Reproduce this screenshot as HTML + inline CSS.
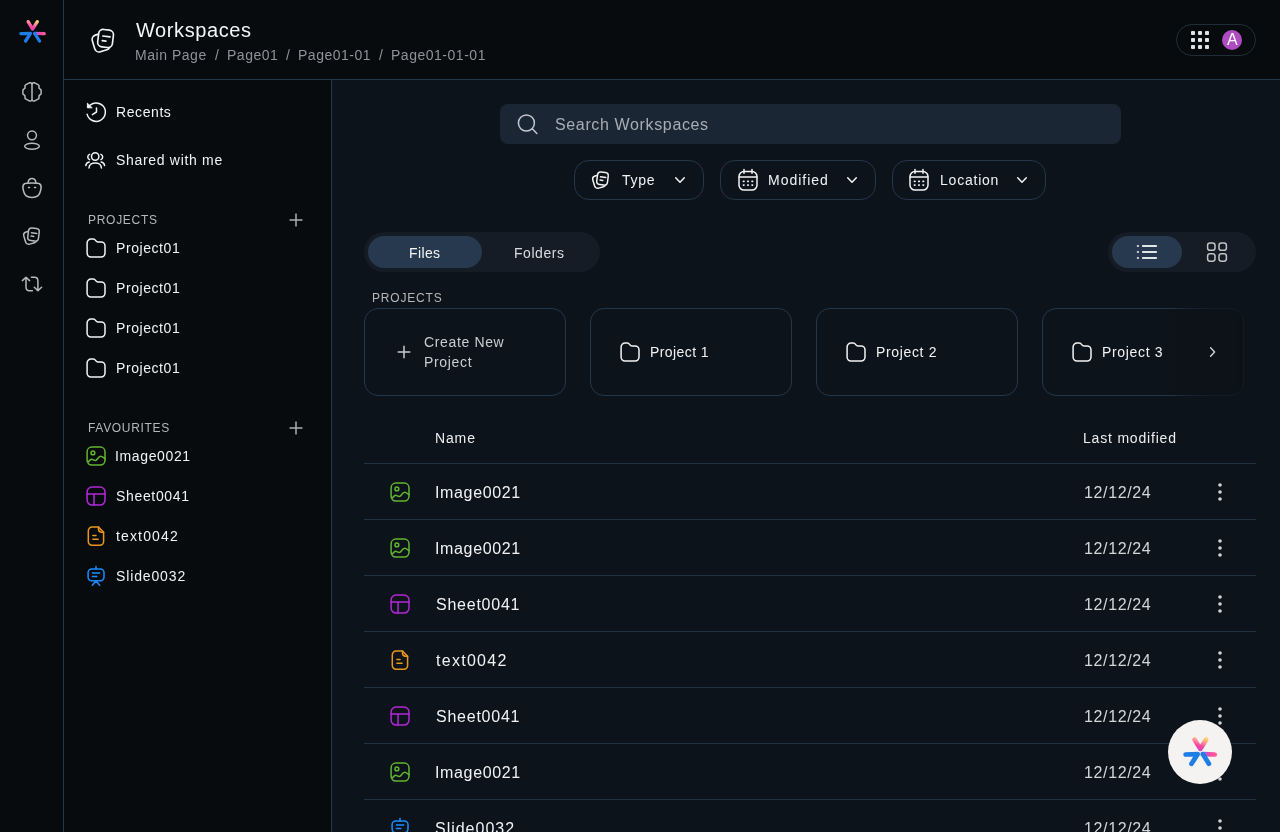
<!DOCTYPE html>
<html lang="en">
<head>
<meta charset="utf-8">
<title>Workspaces</title>
<style>
*{box-sizing:border-box;margin:0;padding:0}
html,body{width:1280px;height:832px;overflow:hidden;background:#070b0e;color:#f1f2f3;font-family:"Liberation Sans",sans-serif}
body{position:relative}
nav,header,aside,main,section{display:contents}
.a{position:absolute}
svg{position:absolute;display:block;overflow:visible}
.t{position:absolute;white-space:nowrap;will-change:transform}
.bd{border:1px solid #24374b}
.line{position:absolute;left:364px;width:892px;height:1px;background:#203145}
</style>
</head>
<body>

<svg width="0" height="0" style="position:absolute">
<defs>
<linearGradient id="gV" gradientUnits="userSpaceOnUse" x1="32.6" y1="31" x2="36.5" y2="19.5"><stop offset="0" stop-color="#a45ee8"/><stop offset="0.12" stop-color="#e246b8"/><stop offset="0.3" stop-color="#f5409f"/><stop offset="0.6" stop-color="#fb8f9e"/><stop offset="0.85" stop-color="#fec86c"/><stop offset="1" stop-color="#ffdc5c"/></linearGradient>
<linearGradient id="gR" gradientUnits="userSpaceOnUse" x1="34" y1="33.5" x2="44.5" y2="33.5"><stop offset="0" stop-color="#3f73ea"/><stop offset="0.3" stop-color="#b25ad8"/><stop offset="0.6" stop-color="#f646a6"/><stop offset="1" stop-color="#ff5c9c"/></linearGradient>
<symbol id="logo" viewBox="14 14 36 36">
<g fill="none" style="stroke-width:var(--sw,3.3)" stroke-linecap="round" stroke-linejoin="round">
<path d="M28.1 21.7 L32.6 29.1 L37.3 21.7" stroke="url(#gV)"/>
<path d="M44.2 33.6 L34.6 33.3" stroke="url(#gR)"/>
<path d="M34.9 33.6 L39.5 41" stroke="#1f7de6"/>
<path d="M20.9 33.6 L30.5 33.3 L25.6 41" stroke="#1f7de6"/>
</g>
</symbol>
<symbol id="i-brain" viewBox="0 0 24 24"><g fill="none" stroke="currentColor" stroke-width="1.5" stroke-linecap="round" stroke-linejoin="round">
<path d="M12 3.6 Q10.9 2.5 9.3 2.8 L5.6 4.8 Q5 5.1 5 5.8 V7.9 Q5 8.4 4.5 8.7 L3.4 9.4 Q2.9 9.7 2.9 10.3 V13.6 Q2.9 14.2 3.4 14.5 L4.5 15.1 Q5 15.4 5 16 V17.9 Q5 18.6 5.6 18.9 L9.3 20.9 Q10.9 21.3 12 20.3"/>
<path d="M 12.0 3.6 Q 13.1 2.5 14.7 2.8 L 18.4 4.8 Q 19.0 5.1 19.0 5.8 V 7.9 Q 19.0 8.4 19.5 8.7 L 20.6 9.4 Q 21.1 9.7 21.1 10.3 V 13.6 Q 21.1 14.2 20.6 14.5 L 19.5 15.1 Q 19.0 15.4 19.0 16 V 17.9 Q 19.0 18.6 18.4 18.9 L 14.7 20.9 Q 13.1 21.3 12.0 20.3"/>
<path d="M12 3.6V20.3"/></g></symbol>
<symbol id="i-user" viewBox="0 0 24 24"><g fill="none" stroke="currentColor" stroke-width="1.5"><circle cx="12" cy="7.35" r="4.45"/><ellipse cx="12" cy="18.3" rx="7.3" ry="3"/></g></symbol>
<symbol id="i-bag" viewBox="0 0 24 24"><g fill="none" stroke="currentColor" stroke-width="1.5" stroke-linecap="round" stroke-linejoin="round">
<path d="M12 6.9 C8 6.9 5.6 7 4.6 7.7 C3 8.9 2.6 10.5 3 12.5 C3.6 16 4.5 18.5 6.3 19.9 C7.8 21.2 10 21.5 12 21.5 C14 21.5 16.2 21.2 17.7 19.9 C19.5 18.5 20.4 16 21 12.5 C21.4 10.5 21 8.9 19.4 7.7 C18.4 7 16 6.9 12 6.9Z"/>
<path d="M8.1 6.9 C8.3 4.2 10 2.6 12 2.6 C14 2.6 15.7 4.2 15.9 6.9"/>
<path d="M8.5 11.4H9.5 M14.6 11.4H15.6"/></g></symbol>
<symbol id="i-stack" viewBox="0 0 24 24"><g fill="none" stroke="currentColor" style="stroke-width:var(--sw,1.5)" stroke-linecap="round" stroke-linejoin="round">
<g transform="rotate(-17 10.2 13.4)"><rect x="4.5" y="7.1" width="11.5" height="12.6" rx="3.3"/></g>
<g transform="rotate(7 13.5 10.5)"><rect x="8.1" y="4.2" width="10.8" height="12.7" rx="3.3" fill="var(--bg,#070b0e)"/><path d="M11.3 9H16.6 M11.3 12.4H14"/></g></g></symbol>
<symbol id="i-swap" viewBox="0 0 24 24"><g fill="none" stroke="currentColor" stroke-width="1.5" stroke-linecap="round" stroke-linejoin="round">
<path d="M2.4 8.6 L6 5.2 L9.6 8.6 M6 5.4 V15 C6 17.4 7.2 18.7 9.4 18.7 H12.4"/>
<path d="M21.6 15.3 L17.9 18.7 L14.3 15.3 M17.9 18.5 V9 C17.9 6.6 16.7 5.3 14.5 5.3 H11.5"/></g></symbol>
<symbol id="i-recent" viewBox="0 0 24 24"><g fill="none" stroke="currentColor" stroke-width="1.5" stroke-linecap="round" stroke-linejoin="round">
<path d="M4.3 7.2 A9.25 9.25 0 1 1 3.1 14.2"/>
<path d="M3.4 3.6 V7.8 H7.8 Z" fill="currentColor" stroke-width="1"/>
<path d="M12.5 8.1 V12 L8.4 14.6"/></g></symbol>
<symbol id="i-people" viewBox="0 0 24 24"><g fill="none" stroke="currentColor" stroke-width="1.5" stroke-linecap="round" stroke-linejoin="round">
<circle cx="11.2" cy="8.5" r="3.7"/>
<path d="M5 19.9 C5 16.5 8 14.9 11.2 14.9 C14.4 14.9 17.4 16.5 17.4 19.9"/>
<path d="M5.6 6.4 C3.2 7.4 3.2 10.6 5.6 11.6 M16.9 6.4 C19.3 7.4 19.3 10.6 16.9 11.6"/>
<path d="M1.8 17.6 C2 15.6 3.3 14.5 5.2 14.1 M20.6 17.6 C20.4 15.6 19.1 14.5 17.2 14.1"/></g></symbol>
<symbol id="i-folder" viewBox="0 0 24 24"><path fill="none" stroke="currentColor" stroke-width="1.5" stroke-linejoin="round" d="M3.1 7 A3.9 3.9 0 0 1 7 3.1 H9.2 C10.6 3.1 11.2 3.8 11.7 4.6 C12.2 5.4 12.8 6 14.1 6 H17.1 A3.9 3.9 0 0 1 21 9.9 V17.1 A3.9 3.9 0 0 1 17.1 21 H7 A3.9 3.9 0 0 1 3.1 17.1 Z"/></symbol>
<symbol id="i-image" viewBox="0 0 24 24"><g fill="none" stroke="#62b52e" stroke-width="1.5" stroke-linecap="round" stroke-linejoin="round">
<rect x="3.1" y="3.1" width="17.9" height="18" rx="4.8"/><circle cx="8.9" cy="8.9" r="1.9"/>
<path d="M4.3 18 C5.5 16.6 6.4 15.2 7.6 15.2 C8.9 15.2 10 16.7 11.4 16.6 C13.2 16.4 14.4 12.2 16.5 12.2 C18.2 12.2 19.3 13.4 21 14.6"/></g></symbol>
<symbol id="i-sheet" viewBox="0 0 24 24"><g fill="none" stroke="#b228d8" stroke-width="1.5" stroke-linecap="round" stroke-linejoin="round">
<rect x="3.1" y="3.1" width="17.9" height="18" rx="5"/><path d="M3.1 10.05H21 M10.05 10.05V21.1"/></g></symbol>
<symbol id="i-text" viewBox="0 0 24 24"><g fill="none" stroke="#e8961e" stroke-width="1.5" stroke-linecap="round" stroke-linejoin="round">
<path d="M14.5 3.1 H8 A3.7 3.7 0 0 0 4.3 6.8 V17.5 A3.7 3.7 0 0 0 8 21.2 H15.9 A3.7 3.7 0 0 0 19.6 17.5 V8.2 Z"/>
<path d="M14.5 3.1 V5.3 C14.5 7.4 15.4 8.2 17.5 8.2 H19.6"/>
<path d="M8.9 11.6H12 M8.9 15.2H14.1"/></g></symbol>
<symbol id="i-slide" viewBox="0 0 24 24"><g fill="none" stroke="#1e8cff" stroke-width="1.5" stroke-linecap="round" stroke-linejoin="round">
<rect x="4.1" y="5" width="15.9" height="11.7" rx="3.6"/><path d="M12 2.4V5 M12 17 L8.3 21.3 M12 17 L15.7 21.3 M8.4 8.9H15.7 M8.4 12.5H12.8"/></g></symbol>
<symbol id="i-search" viewBox="0 0 24 24"><g fill="none" stroke="currentColor" stroke-width="1.5" stroke-linecap="round"><circle cx="10.4" cy="11" r="8"/><path d="M16.3 16.8 L20.8 21.4"/></g></symbol>
<symbol id="i-cal" viewBox="0 0 24 24"><g fill="none" stroke="currentColor" stroke-width="1.5" stroke-linecap="round" stroke-linejoin="round">
<path d="M8 1.6v3.6 M16 1.6v3.6 M3.2 9.1h17.6"/><rect x="3" y="3.5" width="18" height="18.6" rx="5"/>
<path stroke-width="1.6" d="M7.4 13.4h.6 M11.7 13.4h.6 M16 13.4h.6 M7.4 17.1h.6 M11.7 17.1h.6 M16 17.1h.6"/></g></symbol>
</defs></svg>

<div class="a" style="left:332px;top:80px;width:948px;height:752px;background:#0d131a"></div>
<div class="a" style="left:63px;top:0;width:1px;height:832px;background:#24384d"></div>
<div class="a" style="left:64px;top:79px;width:1216px;height:1px;background:#24384d"></div>
<div class="a" style="left:331px;top:80px;width:1px;height:752px;background:#24384d"></div>

<nav>
<svg style="left:14px;top:14px" width="36" height="36"><use href="#logo"/></svg>
<svg style="left:20px;top:80px;color:#b9b9b9;" width="24" height="24"><use href="#i-brain"/></svg>
<svg style="left:20px;top:128px;color:#b9b9b9;" width="24" height="24"><use href="#i-user"/></svg>
<svg style="left:20px;top:176px;color:#b9b9b9;" width="24" height="24"><use href="#i-bag"/></svg>
<svg style="left:20px;top:224px;color:#b9b9b9;" width="24" height="24"><use href="#i-stack"/></svg>
<svg style="left:20px;top:272px;color:#b9b9b9;" width="24" height="24"><use href="#i-swap"/></svg>
</nav>
<header>
<svg style="--sw:1.2;left:86.5px;top:23.5px;color:#f3f3f3;" width="33" height="33"><use href="#i-stack"/></svg>
<div class="t" id="ttl" style="left:136.06px;top:17.89px;font-size:20px;line-height:24px;color:#f4f5f6;letter-spacing:0.599px;">Workspaces</div>
<div class="t" id="bc1" style="left:135.28px;top:42.57px;font-size:14px;line-height:24px;color:#8f9397;letter-spacing:0.535px;">Main Page</div>
<div class="t" id="bs1" style="left:215.38px;top:42.57px;font-size:14px;line-height:24px;color:#8f9397;letter-spacing:0.000px;">/</div>
<div class="t" id="bc2" style="left:227.04px;top:42.57px;font-size:14px;line-height:24px;color:#8f9397;letter-spacing:0.514px;">Page01</div>
<div class="t" id="bs2" style="left:286.22px;top:42.57px;font-size:14px;line-height:24px;color:#8f9397;letter-spacing:0.000px;">/</div>
<div class="t" id="bc3" style="left:297.90px;top:42.57px;font-size:14px;line-height:24px;color:#8f9397;letter-spacing:0.517px;">Page01-01</div>
<div class="t" id="bs3" style="left:379.22px;top:42.57px;font-size:14px;line-height:24px;color:#8f9397;letter-spacing:0.000px;">/</div>
<div class="t" id="bc4" style="left:390.90px;top:42.57px;font-size:14px;line-height:24px;color:#8f9397;letter-spacing:0.516px;">Page01-01-01</div>
<div class="a" style="left:1176px;top:24px;width:80px;height:32px;border:1px solid #1f2d3b;border-radius:16px"></div>
<svg style="left:1190px;top:30px" width="20" height="20" viewBox="0 0 20 20" fill="#e4e4e4"><rect x="1" y="1" width="4" height="4" rx="1"/><rect x="8" y="1" width="4" height="4" rx="1"/><rect x="15" y="1" width="4" height="4" rx="1"/><rect x="1" y="8" width="4" height="4" rx="1"/><rect x="8" y="8" width="4" height="4" rx="1"/><rect x="15" y="8" width="4" height="4" rx="1"/><rect x="1" y="15" width="4" height="4" rx="1"/><rect x="8" y="15" width="4" height="4" rx="1"/><rect x="15" y="15" width="4" height="4" rx="1"/></svg>
<div class="a" style="left:1222px;top:30px;width:20px;height:20px;border-radius:10px;background:#b04cc2"></div>
<div class="t" id="av" style="left:1226.90px;top:28.41px;font-size:16px;line-height:24px;color:#ffffff;letter-spacing:0.000px;">A</div>
</header>
<aside>
<svg style="left:84px;top:100px;color:#f3f3f3;" width="24" height="24"><use href="#i-recent"/></svg><div class="t" id="s1" style="left:115.88px;top:100.37px;font-size:14px;line-height:24px;color:#f1f2f3;letter-spacing:0.585px;">Recents</div>
<svg style="left:84px;top:148px;color:#f3f3f3;" width="24" height="24"><use href="#i-people"/></svg><div class="t" id="s2" style="left:115.75px;top:148.37px;font-size:14px;line-height:24px;color:#f1f2f3;letter-spacing:0.686px;">Shared with me</div>
<div class="t" id="l1" style="left:87.77px;top:208.03px;font-size:12px;line-height:24px;color:#b6b7b8;letter-spacing:0.713px;">PROJECTS</div><svg style="left:288px;top:212px" width="16" height="16" viewBox="0 0 16 16"><path d="M8 1.5V14.5M1.5 8H14.5" stroke="#adadad" stroke-width="1.5" fill="none"/></svg>
<svg style="left:84px;top:236px;color:#f3f3f3;" width="24" height="24"><use href="#i-folder"/></svg><div class="t" id="p0" style="left:115.88px;top:236.37px;font-size:14px;line-height:24px;color:#f1f2f3;letter-spacing:0.566px;">Project01</div>
<svg style="left:84px;top:276px;color:#f3f3f3;" width="24" height="24"><use href="#i-folder"/></svg><div class="t" id="p1" style="left:115.88px;top:276.37px;font-size:14px;line-height:24px;color:#f1f2f3;letter-spacing:0.566px;">Project01</div>
<svg style="left:84px;top:316px;color:#f3f3f3;" width="24" height="24"><use href="#i-folder"/></svg><div class="t" id="p2" style="left:115.88px;top:316.37px;font-size:14px;line-height:24px;color:#f1f2f3;letter-spacing:0.566px;">Project01</div>
<svg style="left:84px;top:356px;color:#f3f3f3;" width="24" height="24"><use href="#i-folder"/></svg><div class="t" id="p3" style="left:115.88px;top:356.37px;font-size:14px;line-height:24px;color:#f1f2f3;letter-spacing:0.566px;">Project01</div>
<div class="t" id="l2" style="left:87.77px;top:416.03px;font-size:12px;line-height:24px;color:#b6b7b8;letter-spacing:0.675px;">FAVOURITES</div><svg style="left:288px;top:420px" width="16" height="16" viewBox="0 0 16 16"><path d="M8 1.5V14.5M1.5 8H14.5" stroke="#adadad" stroke-width="1.5" fill="none"/></svg>
<svg style="left:84px;top:444px;" width="24" height="24"><use href="#i-image"/></svg><div class="t" id="f1" style="left:115.33px;top:444.37px;font-size:14px;line-height:24px;color:#f1f2f3;letter-spacing:0.633px;">Image0021</div>
<svg style="left:84px;top:484px;" width="24" height="24"><use href="#i-sheet"/></svg><div class="t" id="f2" style="left:115.75px;top:484.37px;font-size:14px;line-height:24px;color:#f1f2f3;letter-spacing:0.666px;">Sheet0041</div>
<svg style="left:84px;top:524px;" width="24" height="24"><use href="#i-text"/></svg><div class="t" id="f3" style="left:115.72px;top:524.37px;font-size:14px;line-height:24px;color:#f1f2f3;letter-spacing:1.145px;">text0042</div>
<svg style="left:84px;top:564px;" width="24" height="24"><use href="#i-slide"/></svg><div class="t" id="f4" style="left:115.75px;top:564.37px;font-size:14px;line-height:24px;color:#f1f2f3;letter-spacing:0.863px;">Slide0032</div>
</aside>
<main>
<div class="a" style="left:499.5px;top:104px;width:621px;height:40px;border-radius:8px;background:#1b2634"></div>
<svg style="left:516px;top:112px;color:#c3c8cd;" width="24" height="24"><use href="#i-search"/></svg><div class="t" id="sr" style="left:554.69px;top:112.71px;font-size:16px;line-height:24px;color:#a7adb4;letter-spacing:0.639px;">Search Workspaces</div>
<div class="a bd" style="left:573.5px;top:160px;width:130px;height:40px;border-radius:15px"></div>
<div class="a bd" style="left:719.5px;top:160px;width:156px;height:40px;border-radius:15px"></div>
<div class="a bd" style="left:891.5px;top:160px;width:154.5px;height:40px;border-radius:15px"></div>
<svg style="left:589px;top:168px;color:#f3f3f3;--bg:#0d131a;" width="24" height="24"><use href="#i-stack"/></svg><div class="t" id="t1" style="left:621.70px;top:168.37px;font-size:14px;line-height:24px;color:#f1f2f3;letter-spacing:0.733px;">Type</div><svg style="left:671.7px;top:172px" width="16" height="16" viewBox="0 0 16 16"><path d="M3.7 5.7 L8 10.3 L12.3 5.7" stroke="#f1f2f3" stroke-width="1.5" fill="none" stroke-linecap="round" stroke-linejoin="round"/></svg>
<svg style="left:735.5px;top:168px;color:#f3f3f3;" width="24" height="24"><use href="#i-cal"/></svg><div class="t" id="t2" style="left:767.60px;top:168.37px;font-size:14px;line-height:24px;color:#f1f2f3;letter-spacing:0.982px;">Modified</div><svg style="left:843.5px;top:172px" width="16" height="16" viewBox="0 0 16 16"><path d="M3.7 5.7 L8 10.3 L12.3 5.7" stroke="#f1f2f3" stroke-width="1.5" fill="none" stroke-linecap="round" stroke-linejoin="round"/></svg>
<svg style="left:907px;top:168px;color:#f3f3f3;" width="24" height="24"><use href="#i-cal"/></svg><div class="t" id="t3" style="left:939.88px;top:168.37px;font-size:14px;line-height:24px;color:#f1f2f3;letter-spacing:0.780px;">Location</div><svg style="left:1014.4px;top:172px" width="16" height="16" viewBox="0 0 16 16"><path d="M3.7 5.7 L8 10.3 L12.3 5.7" stroke="#f1f2f3" stroke-width="1.5" fill="none" stroke-linecap="round" stroke-linejoin="round"/></svg>
<div class="a" style="left:364px;top:232px;width:236px;height:40px;border-radius:20px;background:#151c26"></div>
<div class="a" style="left:368px;top:236px;width:114px;height:32px;border-radius:16px;background:#27394e"></div>
<div class="t" id="tb1" style="left:409.37px;top:240.87px;font-size:14px;line-height:24px;color:#f4f5f6;letter-spacing:0.372px;">Files</div><div class="t" id="tb2" style="left:513.58px;top:240.87px;font-size:14px;line-height:24px;color:#d9dcdf;letter-spacing:0.546px;">Folders</div>
<div class="a" style="left:1108px;top:232px;width:148px;height:40px;border-radius:20px;background:#151c26"></div>
<div class="a" style="left:1112px;top:236px;width:70px;height:32px;border-radius:16px;background:#27394e"></div>
<svg style="left:1135px;top:240px" width="24" height="24" viewBox="0 0 24 24" fill="#e2e4e8"><rect x="1.9" y="5.1" width="2" height="1.7"/><rect x="1.9" y="11.1" width="2" height="1.7"/><rect x="1.9" y="17.1" width="2" height="1.7"/><rect x="7" y="4.9" width="15" height="2" rx=".6"/><rect x="7" y="10.9" width="15" height="2" rx=".6"/><rect x="7" y="16.9" width="15" height="2" rx=".6"/></svg>
<svg style="left:1205px;top:240px" width="24" height="24" viewBox="0 0 24 24" fill="none" stroke="#c2c2c2" stroke-width="1.5"><rect x="2.6" y="2.9" width="7.4" height="7.4" rx="2.4"/><rect x="14" y="2.9" width="7.4" height="7.4" rx="2.4"/><rect x="2.6" y="13.8" width="7.4" height="7.4" rx="2.4"/><rect x="14" y="13.8" width="7.4" height="7.4" rx="2.4"/></svg>

<section><div class="t" id="l3" style="left:371.87px;top:286.03px;font-size:12px;line-height:24px;color:#b6b7b8;letter-spacing:0.823px;">PROJECTS</div>
<div class="a bd" style="left:364px;top:308px;width:202px;height:88px;border-radius:14px"></div>
<div class="a bd" style="left:590px;top:308px;width:202px;height:88px;border-radius:14px"></div>
<div class="a bd" style="left:816px;top:308px;width:202px;height:88px;border-radius:14px"></div>
<div class="a bd" style="left:1042px;top:308px;width:202px;height:88px;border-radius:14px"></div>
<svg style="left:396.2px;top:344.3px" width="16" height="16" viewBox="0 0 16 16"><path d="M8 1.7000000000000002V14.3M1.7000000000000002 8H14.3" stroke="#c9cdd1" stroke-width="1.5" fill="none"/></svg><div class="t" id="c0a" style="left:423.71px;top:330.37px;font-size:14px;line-height:24px;color:#c9cdd1;letter-spacing:0.640px;">Create New</div><div class="t" id="c0b" style="left:423.85px;top:350.37px;font-size:14px;line-height:24px;color:#c9cdd1;letter-spacing:0.673px;">Project</div>
<svg style="left:618px;top:340px;color:#f3f3f3;" width="24" height="24"><use href="#i-folder"/></svg><div class="t" id="c1" style="left:649.73px;top:340.37px;font-size:14px;line-height:24px;color:#f1f2f3;letter-spacing:0.414px;">Project 1</div>
<svg style="left:844px;top:340px;color:#f3f3f3;" width="24" height="24"><use href="#i-folder"/></svg><div class="t" id="c2" style="left:875.73px;top:340.37px;font-size:14px;line-height:24px;color:#f1f2f3;letter-spacing:0.656px;">Project 2</div>
<svg style="left:1070px;top:340px;color:#f3f3f3;" width="24" height="24"><use href="#i-folder"/></svg><div class="t" id="c3" style="left:1101.73px;top:340.37px;font-size:14px;line-height:24px;color:#f1f2f3;letter-spacing:0.668px;">Project 3</div>
<div class="a" style="left:1166px;top:308px;width:78px;height:88px;border-radius:0 14px 14px 0;background:linear-gradient(90deg,rgba(12,18,25,0),rgba(12,18,25,.55) 35%,rgba(12,18,25,.78) 70%,rgba(12,18,25,.8))"></div>
<svg style="left:1204px;top:344px" width="16" height="16" viewBox="0 0 16 16"><path d="M6.6 3.8 L10.6 8 L6.6 12.2" stroke="#cfd3d7" stroke-width="1.4" fill="none" stroke-linecap="round" stroke-linejoin="round"/></svg>
</section>
<section><div class="t" id="h1" style="left:435.36px;top:426.37px;font-size:14px;line-height:24px;color:#eceef0;letter-spacing:0.859px;">Name</div><div class="t" id="h2" style="left:1083.40px;top:426.37px;font-size:14px;line-height:24px;color:#eceef0;letter-spacing:0.808px;">Last modified</div>
<div class="line" style="top:463px"></div><svg style="left:388px;top:480px;" width="24" height="24"><use href="#i-image"/></svg><div class="t" id="r0" style="left:434.98px;top:480.91px;font-size:16px;line-height:24px;color:#f1f2f3;letter-spacing:0.641px;">Image0021</div><div class="t" id="d0" style="left:1083.90px;top:480.91px;font-size:16px;line-height:24px;color:#d3d6d9;letter-spacing:0.628px;">12/12/24</div>
<svg style="left:1208px;top:480px" width="24" height="24" viewBox="0 0 24 24" fill="#d4d4d4"><circle cx="12" cy="5" r="1.8"/><circle cx="12" cy="12" r="1.8"/><circle cx="12" cy="19" r="1.8"/></svg>
<div class="line" style="top:519px"></div><svg style="left:388px;top:536px;" width="24" height="24"><use href="#i-image"/></svg><div class="t" id="r1" style="left:434.98px;top:536.91px;font-size:16px;line-height:24px;color:#f1f2f3;letter-spacing:0.641px;">Image0021</div><div class="t" id="d1" style="left:1083.90px;top:536.91px;font-size:16px;line-height:24px;color:#d3d6d9;letter-spacing:0.628px;">12/12/24</div>
<svg style="left:1208px;top:536px" width="24" height="24" viewBox="0 0 24 24" fill="#d4d4d4"><circle cx="12" cy="5" r="1.8"/><circle cx="12" cy="12" r="1.8"/><circle cx="12" cy="19" r="1.8"/></svg>
<div class="line" style="top:575px"></div><svg style="left:388px;top:592px;" width="24" height="24"><use href="#i-sheet"/></svg><div class="t" id="r2" style="left:436.00px;top:592.91px;font-size:16px;line-height:24px;color:#f1f2f3;letter-spacing:0.759px;">Sheet0041</div><div class="t" id="d2" style="left:1083.90px;top:592.91px;font-size:16px;line-height:24px;color:#d3d6d9;letter-spacing:0.628px;">12/12/24</div>
<svg style="left:1208px;top:592px" width="24" height="24" viewBox="0 0 24 24" fill="#d4d4d4"><circle cx="12" cy="5" r="1.8"/><circle cx="12" cy="12" r="1.8"/><circle cx="12" cy="19" r="1.8"/></svg>
<div class="line" style="top:631px"></div><svg style="left:388px;top:648px;" width="24" height="24"><use href="#i-text"/></svg><div class="t" id="r3" style="left:436.04px;top:648.91px;font-size:16px;line-height:24px;color:#f1f2f3;letter-spacing:1.275px;">text0042</div><div class="t" id="d3" style="left:1083.90px;top:648.91px;font-size:16px;line-height:24px;color:#d3d6d9;letter-spacing:0.628px;">12/12/24</div>
<svg style="left:1208px;top:648px" width="24" height="24" viewBox="0 0 24 24" fill="#d4d4d4"><circle cx="12" cy="5" r="1.8"/><circle cx="12" cy="12" r="1.8"/><circle cx="12" cy="19" r="1.8"/></svg>
<div class="line" style="top:687px"></div><svg style="left:388px;top:704px;" width="24" height="24"><use href="#i-sheet"/></svg><div class="t" id="r4" style="left:436.00px;top:704.91px;font-size:16px;line-height:24px;color:#f1f2f3;letter-spacing:0.759px;">Sheet0041</div><div class="t" id="d4" style="left:1083.90px;top:704.91px;font-size:16px;line-height:24px;color:#d3d6d9;letter-spacing:0.628px;">12/12/24</div>
<svg style="left:1208px;top:704px" width="24" height="24" viewBox="0 0 24 24" fill="#d4d4d4"><circle cx="12" cy="5" r="1.8"/><circle cx="12" cy="12" r="1.8"/><circle cx="12" cy="19" r="1.8"/></svg>
<div class="line" style="top:743px"></div><svg style="left:388px;top:760px;" width="24" height="24"><use href="#i-image"/></svg><div class="t" id="r5" style="left:434.98px;top:760.91px;font-size:16px;line-height:24px;color:#f1f2f3;letter-spacing:0.641px;">Image0021</div><div class="t" id="d5" style="left:1083.90px;top:760.91px;font-size:16px;line-height:24px;color:#d3d6d9;letter-spacing:0.628px;">12/12/24</div>
<svg style="left:1208px;top:760px" width="24" height="24" viewBox="0 0 24 24" fill="#d4d4d4"><circle cx="12" cy="5" r="1.8"/><circle cx="12" cy="12" r="1.8"/><circle cx="12" cy="19" r="1.8"/></svg>
<div class="line" style="top:799px"></div><svg style="left:388px;top:816px;" width="24" height="24"><use href="#i-slide"/></svg><div class="t" id="r6" style="left:434.98px;top:816.91px;font-size:16px;line-height:24px;color:#f1f2f3;letter-spacing:0.986px;">Slide0032</div><div class="t" id="d6" style="left:1083.90px;top:816.91px;font-size:16px;line-height:24px;color:#d3d6d9;letter-spacing:0.628px;">12/12/24</div>
<svg style="left:1208px;top:816px" width="24" height="24" viewBox="0 0 24 24" fill="#d4d4d4"><circle cx="12" cy="5" r="1.8"/><circle cx="12" cy="12" r="1.8"/><circle cx="12" cy="19" r="1.8"/></svg>
</section>
<div class="a" style="left:1168px;top:720px;width:64px;height:64px;border-radius:32px;background:#f5f3f1"></div><svg style="left:1176.65px;top:729.6px;--sw:3.8" width="45" height="45"><use href="#logo"/></svg>
</main>
</body>
</html>
